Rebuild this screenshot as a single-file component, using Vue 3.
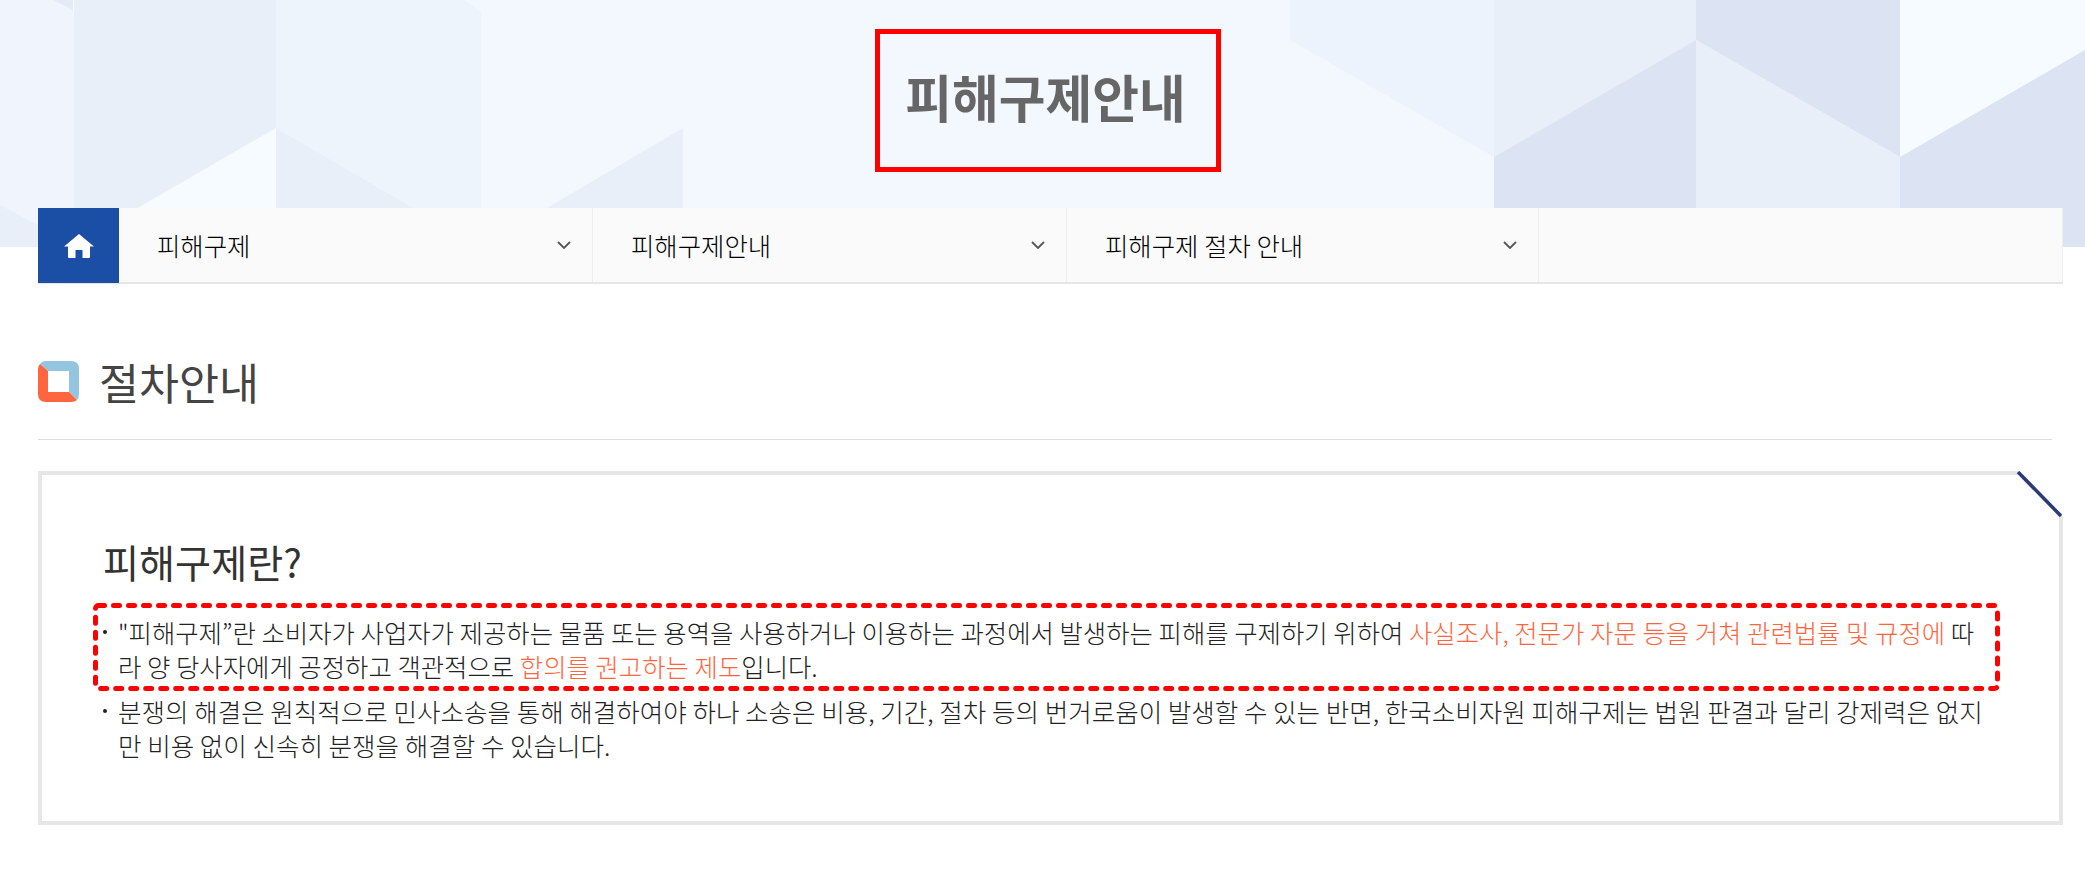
<script setup>
const navItems = ['피해구제', '피해구제안내', '피해구제 절차 안내']
</script>

<template>
  <div class="page">
    <header class="hero">
      <svg class="hero-bg" width="2085" height="247" viewBox="0 0 2085 247">
        <polygon points="0,0 74,0 74,247 0,247" fill="#f0f5fd" />
        <polygon points="53,0 73,0 73,10" fill="#e4ebf7" />
        <polygon points="73,0 90,0 73,10" fill="#f8fcff" />
        <polygon points="0,205 38,225 38,247 0,247" fill="#e8eff9" />
        <polygon points="74,0 276,0 276,128 138,208 38,247 74,247" fill="#e8eff9" />
        <polygon points="138,208 276,128 276,208" fill="#f6fbff" />
        <polygon points="276,0 464,0 481,12 481,208 413,208 276,128" fill="#edf4fc" />
        <polygon points="276,128 413,208 276,208" fill="#e8eff9" />
        <polygon points="547,208 683,128 683,208" fill="#e8eff9" />
        <polygon points="1290,0 1494,0 1494,157 1290,40" fill="#ecf3fc" />
        <polygon points="1494,0 1696,0 1696,40 1494,157" fill="#e8eff9" />
        <polygon points="1494,157 1696,40 1696,247 1494,247" fill="#dce3f2" />
        <polygon points="1696,0 1900,0 1900,157 1696,40" fill="#dce3f2" />
        <polygon points="1696,40 1900,157 1900,247 1696,247" fill="#e8eff9" />
        <polygon points="1900,0 2085,0 2085,50 1900,157" fill="#f6fbff" />
        <polygon points="1900,157 2085,50 2085,247 1900,247" fill="#dce3f2" />
      </svg>
      <h1 class="hero-title">피해구제안내</h1>
    </header>

    <nav class="crumbs">
      <a class="home">
        <svg width="30" height="24" viewBox="0 0 30 24">
          <path d="M15 0 L30 12.5 L26 12.5 L26 23 Q26 24 25 24 L18.5 24 L18.5 16 L11.5 16 L11.5 24 L5 24 Q4 24 4 23 L4 12.5 L0 12.5 Z" fill="#fff" />
        </svg>
      </a>
      <a v-for="item in navItems" :key="item" class="crumb">
        <span>{{ item }}</span>
        <svg width="14" height="8" viewBox="0 0 14 8">
          <path d="M1 1 L7 7 L13 1" fill="none" stroke="#555" stroke-width="1.8" />
        </svg>
      </a>
      <div class="crumb-rest"></div>
    </nav>

    <main class="content">
      <div class="section-head">
        <svg width="41" height="41" viewBox="0 0 41 41">
          <path d="M8 0 L33 0 Q41 0 41 8 L41 33 Q41 37 39 39 L31 31 L31 10 L10 10 L2 3 Q4 0 8 0 Z" fill="#93c4e0" />
          <path d="M2 3 L10 10 L10 31 L31 31 L39 39 Q37 41 33 41 L8 41 Q0 41 0 33 L0 8 Q0 5 2 3 Z" fill="#ff6640" />
        </svg>
        <h2>절차안내</h2>
      </div>

      <section class="panel">
        <svg class="panel-corner" width="50" height="50" viewBox="0 0 50 50">
          <polygon points="4,0 50,0 50,46" fill="#fff" />
          <line x1="5" y1="1" x2="48" y2="45" stroke="#2a3a78" stroke-width="3.5" />
        </svg>
        <h3>피해구제란?</h3>
        <ul>
          <li class="marked">
            <svg class="dash" width="1907" height="88">
              <rect x="2.5" y="2.5" width="1902" height="83" rx="3" fill="none" stroke="#ff0000" stroke-width="5" stroke-dasharray="6 9" stroke-linecap="round" />
            </svg>
            "피해구제”란 소비자가 사업자가 제공하는 물품 또는 용역을 사용하거나 이용하는 과정에서 발생하는 피해를 구제하기 위하여 <em>사실조사, 전문가 자문 등을 거쳐 관련법률 및 규정에</em> 따라 양 당사자에게 공정하고 객관적으로 <em>합의를 권고하는 제도</em>입니다.
          </li>
          <li>분쟁의 해결은 원칙적으로 민사소송을 통해 해결하여야 하나 소송은 비용, 기간, 절차 등의 번거로움이 발생할 수 있는 반면, 한국소비자원 피해구제는 법원 판결과 달리 강제력은 없지만 비용 없이 신속히 분쟁을 해결할 수 있습니다.</li>
        </ul>
      </section>
    </main>
  </div>
</template>

<style scoped>
.page {
  width: 2085px;
  height: 877px;
  overflow: hidden;
  font-family: "Noto Sans CJK KR", "Noto Sans", sans-serif;
  color: #333;
  background: #fff;
}

.hero {
  position: relative;
  height: 247px;
  background: #f3f8ff;
  display: flex;
  justify-content: center;
  align-items: flex-start;
  padding-left: 11px;
  box-sizing: border-box;
}

.hero-bg {
  position: absolute;
  top: 0;
  left: 0;
}

.hero-title {
  position: relative;
  box-sizing: border-box;
  width: 346px;
  height: 143px;
  margin: 29px 0 0;
  padding-right: 5px;
  border: 5px solid #ff0000;
  font-size: 50.8px;
  font-weight: 700;
  line-height: 125px;
  text-align: center;
  color: #666;
}

.crumbs {
  position: relative;
  display: flex;
  height: 76px;
  margin: -39px 22px 0 38px;
  background: #fafafa;
  border-bottom: 2px solid #e6e6e6;
  box-sizing: border-box;
}

.home {
  width: 81px;
  height: 75px;
  background: #1a4fa5;
  display: flex;
  align-items: center;
  justify-content: center;
}

.crumb {
  box-sizing: border-box;
  width: 474px;
  padding: 0 21px 0 38px;
  border-right: 1px solid #eeeeee;
  display: flex;
  align-items: center;
  justify-content: space-between;
  font-size: 25.4px;
  font-weight: 300;
  color: #000;
}

.crumb:nth-child(4) {
  width: 472px;
}

.crumb-rest {
  flex: 1;
  border-right: 1px solid #eeeeee;
}

.content {
  padding: 0 22px 0 38px;
}

.section-head {
  display: flex;
  align-items: center;
  gap: 20px;
  height: 156px;
  box-sizing: border-box;
  padding: 39px 0 0;
  border-bottom: 1px solid #dddddd;
  margin-right: 11px;
}

.section-head h2 {
  margin: 0;
  font-size: 43.5px;
  font-weight: 400;
  color: #444;
}

.panel {
  position: relative;
  box-sizing: border-box;
  height: 354px;
  margin-top: 31px;
  padding: 60px 59px 0 61px;
  border: 4px solid #e6e6e6;
}

.panel-corner {
  position: absolute;
  top: -4px;
  right: -4px;
}

.panel h3 {
  margin: 0;
  font-size: 39.2px;
  font-weight: 400;
  line-height: 52px;
  color: #333;
}

ul {
  list-style: none;
  margin: 28px 0 0;
  padding: 0;
}

li {
  position: relative;
  padding-left: 15px;
  font-size: 25.55px;
  font-weight: 300;
  line-height: 34px;
  word-break: break-all;
  color: #222;
}

li::before {
  content: "";
  position: absolute;
  left: 0;
  top: 15px;
  width: 4px;
  height: 4px;
  border-radius: 50%;
  background: #222;
}

.marked {
  margin-bottom: 11px;
  padding-right: 10px;
  font-size: 25.4px;
}

.dash {
  position: absolute;
  left: -10px;
  top: -12px;
}

em {
  font-style: normal;
  color: #ff6640;
}
</style>
